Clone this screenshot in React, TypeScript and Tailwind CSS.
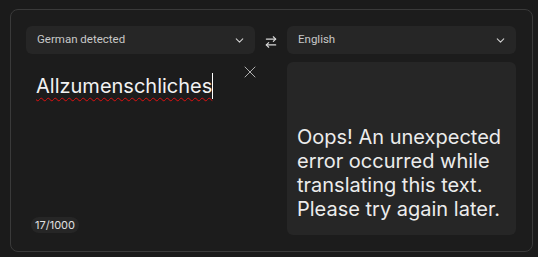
import { ArrowRightLeft, ChevronDown, X } from 'lucide-react';

/* ─── Language select pill ─── */
function LangSelect({ label }: { label: string }) {
  return (
    <div className="flex h-[28px] items-center justify-between rounded-md bg-[#262626] pl-[11px] pr-[9px] font-['Roboto',sans-serif] text-[11.5px] text-[#c8c8c8]">
      <span>{label}</span>
      <ChevronDown size={13} strokeWidth={2} className="text-[#cfcfcf]" />
    </div>
  );
}

export default function App() {
  return (
    <div
      className="h-[257px] w-[538px] overflow-hidden bg-[#1b1b1b] pl-[10px] pt-[9px]"
      style={{ fontFamily: "Inter, 'Noto Sans', sans-serif" }}
    >
      <div className="h-[243px] w-[523px] rounded-lg border border-[#3a3a3a] bg-[#1c1c1c] pb-[16px] pl-[15px] pr-[16px] pt-[16px]">
        <div className="grid grid-cols-[229px_32px_229px] grid-rows-[28px_173px] gap-y-[8px]">
          <LangSelect label="German detected" />
          <div className="flex items-center justify-center pt-[4px] text-[#d8d8d8]">
            <ArrowRightLeft size={14} strokeWidth={2} />
          </div>
          <LangSelect label="English" />

          {/* Source text */}
          <div className="relative flex flex-col justify-between pb-[2px]">
            <div className="flex items-start pl-[10px] pt-[9px]">
              <span className="text-[20px] leading-[30px] text-[#f2f2f2] underline decoration-[#d11] decoration-wavy decoration-1 underline-offset-[4px]">
                Allzumenschliches
              </span>
              <span className="mt-[2px] h-[26px] w-px bg-white" />
            </div>
            <button className="absolute right-[-5px] top-0 text-[#bdbdbd]">
              <X size={20} strokeWidth={1.1} />
            </button>
            <span className="ml-[5px] self-start rounded-full bg-[#262626] px-[4px] py-[1px] text-[11px] leading-[14px] text-[#e0e0e0]">
              17/1000
            </span>
          </div>
          <div />

          {/* Translation output */}
          <div className="flex flex-col justify-end rounded-md bg-[#262626] pb-[14px] pl-[10px] pr-[8px] text-[20px] leading-[24px] text-[#ececec]">
            Oops! An unexpected error occurred while translating this text. Please try again later.
          </div>
        </div>
      </div>
    </div>
  );
}
